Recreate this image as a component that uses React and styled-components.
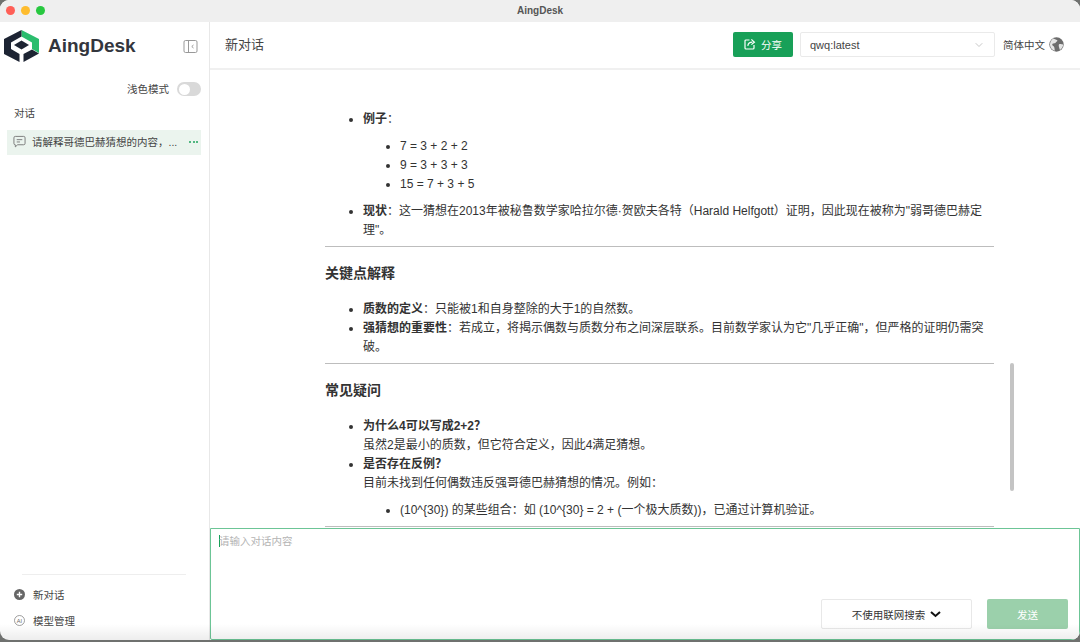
import React from 'react';
import styled, { createGlobalStyle } from 'styled-components';
import { ChevronDown } from 'lucide-react';

const GlobalStyle = createGlobalStyle`
  html, body { margin: 0; padding: 0; height: 100%; background: #6f716f; overflow: hidden; }
  * { box-sizing: border-box; }
  body { font-family: "Liberation Sans", "Noto Sans CJK SC", sans-serif; color: #333; }
`;

const Window = styled.div`
  width: 1080px;
  height: 640px;
  background: #fff;
  border-radius: 9px;
  overflow: hidden;
  display: flex;
  flex-direction: column;
  position: relative;
`;

const TitleBar = styled.div`
  height: 22px;
  flex: none;
  background: #efefef;
  display: flex;
  align-items: center;
  justify-content: center;
  position: relative;
  padding-bottom: 2px;
  font-size: 10px;
  font-weight: 700;
  color: #555;
`;

const Lights = styled.div`
  position: absolute;
  left: 6px;
  top: 6px;
  display: flex;
  gap: 6px;
`;

const Light = styled.span`
  width: 9px;
  height: 9px;
  border-radius: 50%;
  background: ${p => p.color};
`;

const Body = styled.div`
  flex: 1;
  display: flex;
  min-height: 0;
`;

const Sidebar = styled.aside`
  width: 210px;
  flex: none;
  border-right: 1px solid #e8e8e8;
  display: flex;
  flex-direction: column;
`;

const Brand = styled.div`
  height: 48px;
  display: flex;
  align-items: center;
  padding: 0 0 0 4px;
  gap: 9px;
`;

const BrandName = styled.div`
  font-size: 19px;
  font-weight: 700;
  color: #33363d;
  flex: 1;
`;

const Collapse = styled.svg`
  width: 15px;
  height: 15px;
  margin-right: 11px;
`;

const ThemeRow = styled.div`
  display: flex;
  justify-content: flex-end;
  align-items: center;
  gap: 8px;
  padding: 11px 8px 0 0;
  font-size: 10.5px;
  line-height: 16px;
  color: #444;
  height: 27px;
`;

const Toggle = styled.span`
  width: 24px;
  height: 14px;
  border-radius: 7px;
  background: #d9d9d9;
  padding: 1.5px;
  display: flex;
`;

const Knob = styled.span`
  width: 11px;
  height: 11px;
  border-radius: 50%;
  background: #fff;
`;

const SectionLabel = styled.div`
  font-size: 10.5px;
  line-height: 14px;
  color: #444;
  padding: 9px 0 0 14px;
  height: 33px;
`;

const ChatItem = styled.div`
  margin: 0 8px 0 7px;
  height: 25px;
  background: #ebf4ee;
  display: flex;
  align-items: center;
  padding: 0 0 2px 6px;
  font-size: 10.5px;
  color: #444;
  gap: 6px;
`;

const ChatIconBox = styled.svg`
  width: 13px;
  height: 13px;
  flex: none;
`;

const ChatText = styled.span`
  flex: 1;
  min-width: 0;
  white-space: nowrap;
`;

const Dots = styled.span`
  display: flex;
  flex: none;
  gap: 1.5px;
  margin-right: 3px;
`;

const Dot = styled.i`
  width: 2px;
  height: 2px;
  border-radius: 50%;
  background: #1fa35c;
`;

const SideFoot = styled.div`
  margin-top: auto;
  padding-bottom: 7px;
`;

const Rule = styled.div`
  height: 1px;
  margin: 0 23px 7px 22px;
  background: #eeeeee;
`;

const FootItem = styled.div`
  height: 25.5px;
  display: flex;
  align-items: center;
  gap: 8px;
  padding-left: 14px;
  font-size: 10.5px;
  color: #444;
`;

const Main = styled.main`
  flex: 1;
  min-width: 0;
  display: flex;
  flex-direction: column;
  position: relative;
`;

const Header = styled.header`
  height: 48px;
  flex: none;
  border-bottom: 2px solid #f0f0f0;
  display: flex;
  align-items: center;
  padding: 0 16px 2px 15px;
`;

const PageTitle = styled.div`
  font-size: 13px;
  color: #444;
  flex: 1;
  margin-bottom: 2px;
`;

const ShareButton = styled.button`
  width: 60px;
  height: 25px;
  border: 0;
  border-radius: 2px;
  background: #18a058;
  color: #fff;
  font: inherit;
  font-size: 10.5px;
  display: flex;
  align-items: center;
  justify-content: center;
  gap: 5px;
  padding: 0;
`;

const ModelSelect = styled.div`
  width: 195px;
  height: 25px;
  margin-left: 7px;
  border: 1px solid #eaeaea;
  border-radius: 2px;
  display: flex;
  align-items: center;
  justify-content: space-between;
  padding: 1px 9px 0;
  font-size: 11px;
  color: #444;
`;

const Lang = styled.div`
  display: flex;
  align-items: center;
  gap: 4px;
  margin-left: 8px;
  font-size: 10.5px;
  color: #444;
`;

const Scroller = styled.div`
  flex: 1;
  min-height: 0;
  overflow: hidden;
  position: relative;
`;

const Thumb = styled.div`
  position: absolute;
  left: 800px;
  top: 293px;
  width: 4px;
  height: 128px;
  border-radius: 2px;
  background: #c4c4c4;
`;

const Article = styled.article`
  width: 669px;
  margin-left: 115px;
  padding-top: 39.5px;
  font-size: 12px;
  line-height: 19px;
  color: #333;
`;

const List = styled.ul`
  margin: 0;
  padding-left: 38px;
`;

const SubList = styled.ul`
  margin: 8px 0 ${p => (p.$last ? '6px' : '8px')};
  padding-left: 37px;
  list-style-type: disc;
`;

const Hr = styled.hr`
  border: 0;
  height: 1px;
  background: #bdbdbd;
  margin: 6px 0 0;
`;

const Heading = styled.h3`
  font-size: 14px;
  line-height: 19px;
  font-weight: 700;
  margin: 17px 0 17px;
  color: #333;
`;

const Composer = styled.div`
  height: 112px;
  flex: none;
  border: 1px solid #6cc596;
  background: #fff;
  position: relative;
  z-index: 1;
  border-radius: 0 0 2px 2px;
  padding: 5px 8px 10px;
  display: flex;
  flex-direction: column;
`;

const Placeholder = styled.div`
  font-size: 10.5px;
  line-height: 14px;
  color: #b4b4b4;
  flex: 1;
`;

const Caret = styled.span`
  display: inline-block;
  width: 1px;
  height: 12px;
  margin-right: -1px;
  vertical-align: -2px;
  background: #18a058;
`;

const ComposerActions = styled.div`
  display: flex;
  justify-content: flex-end;
  gap: 15px;
  padding-right: 3px;
`;

const SearchMode = styled.div`
  width: 151px;
  height: 30px;
  border: 1px solid #e8e8e8;
  border-radius: 2px;
  display: flex;
  align-items: center;
  justify-content: center;
  gap: 5px;
  font-size: 10.5px;
  color: #333;
`;

const SendButton = styled.button`
  width: 81px;
  height: 30px;
  border: 0;
  border-radius: 2px;
  background: #9bd0ab;
  color: #fff;
  font: inherit;
  font-size: 10.5px;
  padding: 0;
`;

const Shade = styled.div`
  position: absolute;
  left: 0;
  right: 0;
  bottom: 0;
  height: 16px;
  background: linear-gradient(to bottom, rgba(0,0,0,0), rgba(0,0,0,0.07));
  pointer-events: none;
  z-index: 2;
`;

const Logo = () => (
  <svg width="35" height="32" viewBox="0 0 35 32">
    <path d="M17.5 0 L35 9 V23 L28 19 V12.5 L17.5 6.5 Z" fill="#2bbd6e" />
    <path d="M17.5 0 V6.5 L7 12.5 V19 L15.5 24 V32 L0 24 V9 Z" fill="#1d2433" />
    <path d="M17.5 10.5 L25 15 L17.5 19.5 L10 15 Z" fill="#1d2433" />
    <path d="M19.5 24 L28 19.5 L35 23.5 L19.5 32 Z" fill="#1d2433" />
  </svg>
);

const ChatIcon = () => (
  <ChatIconBox viewBox="0 0 14 14" fill="none" stroke="#777" strokeWidth="1">
    <path d="M2.5 1.5 H11.5 A1.5 1.5 0 0 1 13 3 V9 A1.5 1.5 0 0 1 11.5 10.5 H5 L2.5 12.8 V10.5 A1.5 1.5 0 0 1 1 9 V3 A1.5 1.5 0 0 1 2.5 1.5 Z" />
    <path d="M4 5 H10 M4 7.5 H7.5" />
  </ChatIconBox>
);

const PlusIcon = () => (
  <svg width="11" height="11" viewBox="0 0 11 11">
    <circle cx="5.5" cy="5.5" r="5.5" fill="#666" />
    <path d="M5.5 2.8 V8.2 M2.8 5.5 H8.2" stroke="#fff" strokeWidth="1.4" />
  </svg>
);

const AiIcon = () => (
  <svg width="11" height="11" viewBox="0 0 11 11">
    <circle cx="5.5" cy="5.5" r="5" fill="none" stroke="#777" strokeWidth="0.7" />
    <text x="5.5" y="7.6" textAnchor="middle" fontSize="5.6" fill="#666" fontFamily="Liberation Sans">AI</text>
  </svg>
);

const ShareIcon = () => (
  <svg width="12" height="12" viewBox="0 0 12 12" fill="none" stroke="#fff" strokeWidth="1.2">
    <path d="M5.5 2 H2 A1 1 0 0 0 1 3 V10 A1 1 0 0 0 2 11 H9 A1 1 0 0 0 10 10 V7" />
    <path d="M3.8 7.8 C4.2 5.2 6 4.2 8.4 4.2 M7.4 1.4 L10.4 4.2 L7.4 6.6" />
  </svg>
);

const GlobeIcon = () => (
  <svg width="15" height="15" viewBox="0 0 15 15">
    <circle cx="7.5" cy="7.5" r="7.2" fill="#6c6c6c" />
    <path d="M4.2 1.4 C6 2.4 7.8 2.6 8.4 3.6 C8.8 4.6 7 4.8 6.6 5.8 C6 6.6 4.6 6.2 3.6 6.8 C2.8 7.4 3.4 8.8 4.6 9.2 C5.4 9.6 5.6 11 5.8 13.8 C3.4 13.2 1.2 10.8 1 8 C0.8 5.4 2.2 2.8 4.2 1.4 Z" fill="#e4e4e4" />
    <path d="M10 7.2 C11.4 6.8 13 7 14.2 7.6 C14 9.8 13 11.8 11 13 C10.4 11.6 9.2 8.4 10 7.2 Z" fill="#e4e4e4" />
  </svg>
);

const BoldChevron = () => (
  <svg width="11" height="7" viewBox="0 0 11 7" fill="none" stroke="#111" strokeWidth="2">
    <path d="M1 1 L5.5 5 L10 1" />
  </svg>
);

const App = () => {
  return (
    <>
      <GlobalStyle />
      <Window>
        <TitleBar>
          <Lights>
            <Light color="#ff5f57" />
            <Light color="#febc2e" />
            <Light color="#28c840" />
          </Lights>
          AingDesk
        </TitleBar>
        <Body>
          <Sidebar>
            <Brand>
              <Logo />
              <BrandName>AingDesk</BrandName>
              <Collapse viewBox="0 0 15 15" fill="none" stroke="#999" strokeWidth="1">
                <rect x="1" y="1.5" width="13" height="12" rx="1.5" />
                <path d="M5.5 1.5 V13.5" />
                <path d="M10.5 6 L8.8 7.5 L10.5 9" />
              </Collapse>
            </Brand>
            <ThemeRow>
              浅色模式
              <Toggle><Knob /></Toggle>
            </ThemeRow>
            <SectionLabel>对话</SectionLabel>
            <ChatItem>
              <ChatIcon />
              <ChatText>请解释哥德巴赫猜想的内容，...</ChatText>
              <Dots><Dot /><Dot /><Dot /></Dots>
            </ChatItem>
            <SideFoot>
              <Rule />
              <FootItem><PlusIcon />新对话</FootItem>
              <FootItem><AiIcon />模型管理</FootItem>
            </SideFoot>
          </Sidebar>
          <Main>
            <Header>
              <PageTitle>新对话</PageTitle>
              <ShareButton><ShareIcon />分享</ShareButton>
              <ModelSelect>
                qwq:latest
                <ChevronDown size={12} color="#c8c8c8" />
              </ModelSelect>
              <Lang>简体中文 <GlobeIcon /></Lang>
            </Header>
            <Scroller>
              <Article>
                <List>
                  <li>
                    <b>例子</b>：
                    <SubList>
                      <li>7 = 3 + 2 + 2</li>
                      <li>9 = 3 + 3 + 3</li>
                      <li>15 = 7 + 3 + 5</li>
                    </SubList>
                  </li>
                  <li><b>现状</b>：这一猜想在2013年被秘鲁数学家哈拉尔德·贺欧夫各特（Harald Helfgott）证明，因此现在被称为"弱哥德巴赫定理"。</li>
                </List>
                <Hr />
                <Heading>关键点解释</Heading>
                <List>
                  <li><b>质数的定义</b>：只能被1和自身整除的大于1的自然数。</li>
                  <li><b>强猜想的重要性</b>：若成立，将揭示偶数与质数分布之间深层联系。目前数学家认为它"几乎正确"，但严格的证明仍需突破。</li>
                </List>
                <Hr />
                <Heading>常见疑问</Heading>
                <List>
                  <li><b>为什么4可以写成2+2？</b><br />虽然2是最小的质数，但它符合定义，因此4满足猜想。</li>
                  <li>
                    <b>是否存在反例？</b><br />目前未找到任何偶数违反强哥德巴赫猜想的情况。例如：
                    <SubList $last>
                      <li>(10^{'{'}30{'}'}) 的某些组合：如 (10^{'{'}30{'}'} = 2 + (一个极大质数))，已通过计算机验证。</li>
                    </SubList>
                  </li>
                </List>
                <Hr />
              </Article>
              <Thumb />
            </Scroller>
            <Composer>
              <Placeholder><Caret />请输入对话内容</Placeholder>
              <ComposerActions>
                <SearchMode>不使用联网搜索 <BoldChevron /></SearchMode>
                <SendButton>发送</SendButton>
              </ComposerActions>
            </Composer>
          </Main>
        </Body>
        <Shade />
      </Window>
    </>
  );
};

export default App;
